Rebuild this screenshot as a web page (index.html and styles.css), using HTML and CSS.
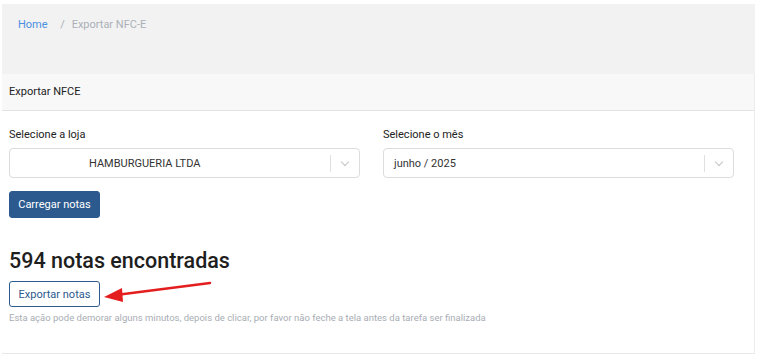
FILE: index.html
```html
<!DOCTYPE html>
<html lang="pt-BR">
<head>
    <meta charset="UTF-8">
    <title>Exportar NFC-E</title>
    <link rel="stylesheet" href="styles.css">
</head>
<body>
<div class="page">
    <div class="crumbs">
        <a href="#">Home</a>
        <span class="sep">/</span>
        <span class="current">Exportar NFC-E</span>
    </div>
    <div class="card">
        <div class="card-head">Exportar NFCE</div>
        <div class="card-body">
            <div class="fields">
                <div class="field">
                    <label>Selecione a loja</label>
                    <div class="select store">
                        <span class="value">HAMBURGUERIA LTDA</span>
                        <span class="bar"></span>
                        <span class="chev"></span>
                    </div>
                </div>
                <div class="field">
                    <label>Selecione o mês</label>
                    <div class="select">
                        <span class="value">junho / 2025</span>
                        <span class="bar"></span>
                        <span class="chev"></span>
                    </div>
                </div>
            </div>
            <button class="btn btn-solid">Carregar notas</button>
            <h2 class="count">594 notas encontradas</h2>
            <div class="export">
                <button class="btn btn-line">Exportar notas</button>
                <svg class="arrow" width="120" height="30" viewBox="0 0 120 30">
                    <line x1="108" y1="4" x2="14" y2="16" stroke="#e41e1e" stroke-width="2.5" stroke-linecap="round"/>
                    <polygon points="2,18 20,9 21,23" fill="#e41e1e"/>
                </svg>
            </div>
            <div class="hint">Esta ação pode demorar alguns minutos, depois de clicar, por favor não feche a tela antes da tarefa ser finalizada</div>
        </div>
    </div>
</div>
</body>
</html>
```

FILE: styles.css
```css
*{
    box-sizing: border-box;
}
body{
    margin: 0;
    background: #fff;
    font-family: Roboto, "Liberation Sans", sans-serif;
    font-size: 11px;
    color: #222;
}
.page{
    margin: 4px 6px 0 2px;
}
.crumbs{
    background: #f2f2f2;
    height: 70px;
    padding: 13px 16px;
    line-height: 16px;
    font-size: 11px;
}
.crumbs a{
    color: #4a8fe0;
    text-decoration: none;
}
.crumbs .sep{
    color: #aab0b8;
    margin: 0 4px 0 10px;
}
.crumbs .current{
    color: #aab0b8;
}
.card{
    border-right: 1px solid #ececec;
    border-bottom: 1px solid #e8e8e8;
}
.card-head{
    background: #f8f8f8;
    height: 37px;
    line-height: 36px;
    padding: 0 7px;
    border-bottom: 1px solid #e3e3e3;
    color: #222;
}
.card-body{
    padding: 15px 7px 28px 7px;
}
.fields{
    display: grid;
    grid-template-columns: 351px 351px;
    column-gap: 23px;
}
.field label{
    display: block;
    line-height: 18px;
    margin-bottom: 4px;
    color: #222;
}
.select{
    display: flex;
    align-items: center;
    height: 30px;
    border: 1px solid #dcdcdc;
    border-radius: 4px;
    padding-left: 10px;
}
.select.store{
    padding-left: 79px;
}
.select .value{
    flex: 1;
    color: #333;
}
.select .bar{
    width: 1px;
    height: 17px;
    background: #e0e0e0;
}
.select .chev{
    width: 28px;
    height: 100%;
    position: relative;
}
.select .chev:after{
    content: "";
    position: absolute;
    left: 11px;
    top: 10px;
    width: 5px;
    height: 5px;
    border-right: 1px solid #c4c4c4;
    border-bottom: 1px solid #c4c4c4;
    transform: rotate(45deg);
}
.btn{
    font-family: Roboto, "Liberation Sans", sans-serif;
    font-size: 11px;
    height: 27px;
    width: 91px;
    border-radius: 3px;
    padding: 0;
    display: block;
}
.btn-solid{
    margin-top: 13px;
    background: #2c5a8e;
    border: 1px solid #2c5a8e;
    color: #fff;
}
.count{
    margin: 30px 0 7px 0;
    font-size: 21.5px;
    line-height: 26px;
    font-weight: 500;
    color: #1e1e1e;
}
.export{
    position: relative;
}
.btn-line{
    height: 26px;
    background: #fff;
    border: 1px solid #2c5a8e;
    color: #2c5a8e;
}
.arrow{
    position: absolute;
    left: 93px;
    top: -2px;
}
.hint{
    margin-top: 4px;
    font-size: 9.5px;
    line-height: 14px;
    color: #a8adb4;
}
```
